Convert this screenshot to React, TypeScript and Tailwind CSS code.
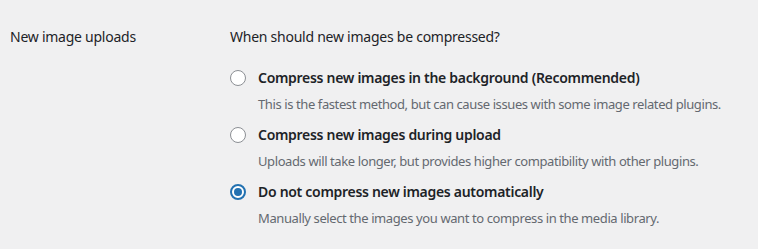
import React from "react";

const options = [
  {
    title: "Compress new images in the background (Recommended)",
    desc: "This is the fastest method, but can cause issues with some image related plugins.",
    checked: false,
  },
  {
    title: "Compress new images during upload",
    desc: "Uploads will take longer, but provides higher compatibility with other plugins.",
    checked: false,
  },
  {
    title: "Do not compress new images automatically",
    desc: "Manually select the images you want to compress in the media library.",
    checked: true,
  },
];

function Radio({ checked }: { checked: boolean }) {
  return (
    <span
      className={
        checked
          ? "flex h-4 w-4 shrink-0 items-center justify-center rounded-full border-2 border-[#2271b1] bg-white"
          : "flex h-4 w-4 shrink-0 items-center justify-center rounded-full border border-[#8c8f94] bg-white"
      }
    >
      {checked && <span className="h-2 w-2 rounded-full bg-[#2271b1]" />}
    </span>
  );
}

export default function App() {
  return (
    <div
      className="h-[249px] w-[758px] bg-[#f0f0f1] text-[#1d2327]"
      style={{ fontFamily: '"Noto Sans", "Open Sans", sans-serif' }}
    >
      <div className="flex pt-[27px]">
        <div className="w-[230px] shrink-0 pl-[10px] text-[14px] leading-5 tracking-[-0.25px]">
          New image uploads
        </div>
        <div className="flex flex-col">
          <div className="text-[14px] leading-5 tracking-[-0.25px]">
            When should new images be compressed?
          </div>
          <div className="mt-[21px] flex flex-col gap-[11px]">
            {options.map((o) => (
              <div key={o.title} className="flex flex-col">
                <div className="flex items-center gap-3">
                  <Radio checked={o.checked} />
                  <span className="text-[14px] font-semibold leading-5 tracking-[-0.3px]">
                    {o.title}
                  </span>
                </div>
                <div className="mt-[6px] pl-7 text-[13px] leading-5 tracking-[-0.4px] text-[#646970]">
                  {o.desc}
                </div>
              </div>
            ))}
          </div>
        </div>
      </div>
    </div>
  );
}
